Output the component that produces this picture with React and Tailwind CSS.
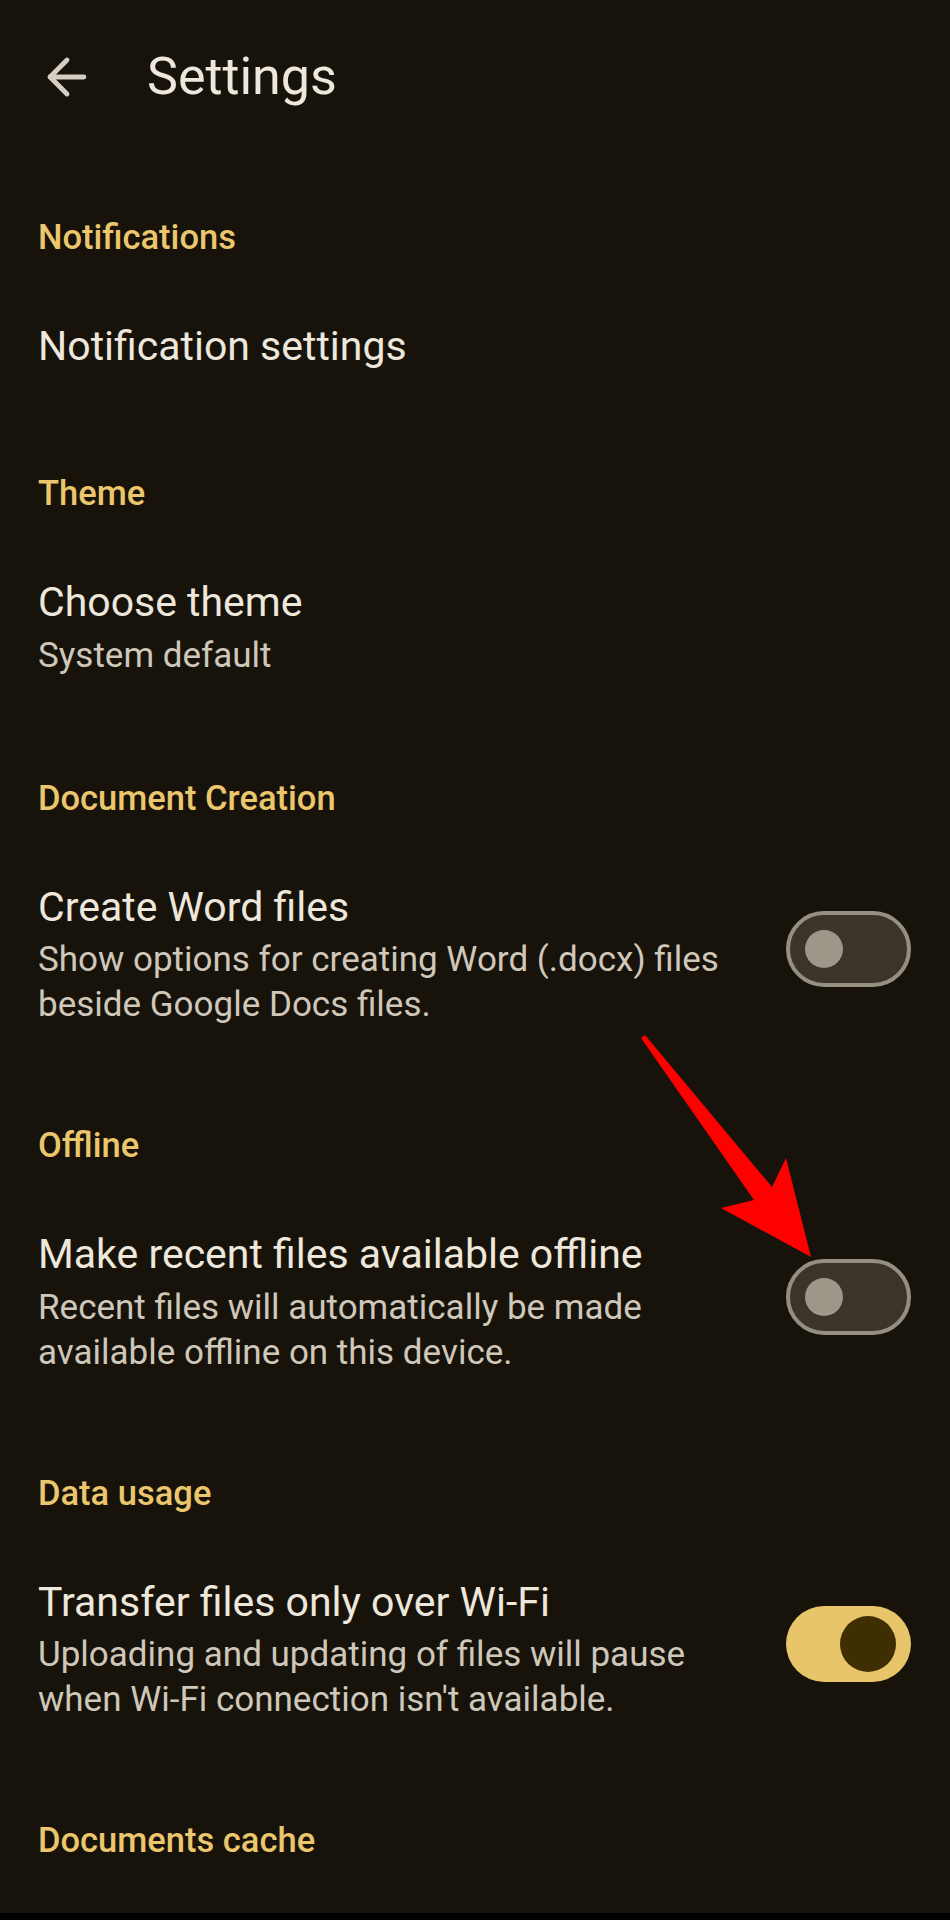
import { ArrowLeft } from "lucide-react";

const sections = [
  { header: "Notifications", title: "Notification settings", gap: "mb-[104px]" },
  {
    header: "Theme",
    title: "Choose theme",
    desc: "System default",
    gap: "mb-[100px]",
  },
  {
    header: "Document Creation",
    title: "Create Word files",
    desc: "Show options for creating Word (.docx) files beside Google Docs files.",
    toggle: "off",
    gap: "mb-[98px]",
  },
  {
    header: "Offline",
    title: "Make recent files available offline",
    desc: "Recent files will automatically be made available offline on this device.",
    toggle: "off",
    gap: "mb-[98px]",
  },
  {
    header: "Data usage",
    title: "Transfer files only over Wi-Fi",
    desc: "Uploading and updating of files will pause when Wi-Fi connection isn't available.",
    toggle: "on",
    gap: "mb-[98px]",
  },
];

const Toggle = ({ on }) =>
  on ? (
    <div className="mb-[12px] flex h-[76px] w-[125px] shrink-0 items-center justify-end rounded-full bg-[#e8c46b] pr-[15px]">
      <div className="h-[56px] w-[56px] rounded-full bg-[#3e2e02]" />
    </div>
  ) : (
    <div className="mb-[12px] flex h-[76px] w-[125px] shrink-0 items-center rounded-full border-[4px] border-[#958f82] bg-[#3a342b] pl-[15px]">
      <div className="h-[38px] w-[38px] rounded-full bg-[#9d978a]" />
    </div>
  );

const Section = ({ header, title, desc, toggle, gap }) => (
  <div className={gap}>
    <div className="text-[34.5px] leading-[40px] font-medium text-[#ebc66d]">
      {header}
    </div>
    <div className="mt-[66px] flex items-center gap-6">
      <div className="flex-1">
        <div className="text-[41px] leading-[46px] text-[#ede7dc]">{title}</div>
        {desc && (
          <div className="mt-[7.5px] text-[35px] leading-[45px] text-[#cec7ba]">
            {desc}
          </div>
        )}
      </div>
      {toggle && <Toggle on={toggle === "on"} />}
    </div>
  </div>
);

export default function App() {
  return (
    <div
      className="relative flex h-[1920px] w-[950px] flex-col overflow-hidden bg-[#17130b]"
      style={{ fontFamily: "Roboto, 'Noto Sans', sans-serif" }}
    >
      <div className="flex h-[154px] items-center pl-[38px]">
        <ArrowLeft size={58} strokeWidth={2} className="text-[#d5cfc3]" />
        <span className="ml-[51px] text-[52px] leading-[52px] text-[#ede7dc]">
          Settings
        </span>
      </div>

      <div className="flex-1 pt-[63px] pl-[38px] pr-[39px]">
        {sections.map((s) => (
          <Section key={s.header} {...s} />
        ))}
        <div className="text-[34.5px] leading-[40px] font-medium text-[#ebc66d]">
          Documents cache
        </div>
      </div>

      <div className="h-[7px] bg-black" />

      {/* red annotation arrow over the offline toggle */}
      <svg
        className="pointer-events-none absolute inset-0"
        width="950"
        height="1920"
        viewBox="0 0 950 1920"
      >
        <polygon
          points="641,1038 754,1200 721,1208 811,1257 786,1158 772,1187 645,1035"
          fill="#ff0000"
        />
      </svg>
    </div>
  );
}
